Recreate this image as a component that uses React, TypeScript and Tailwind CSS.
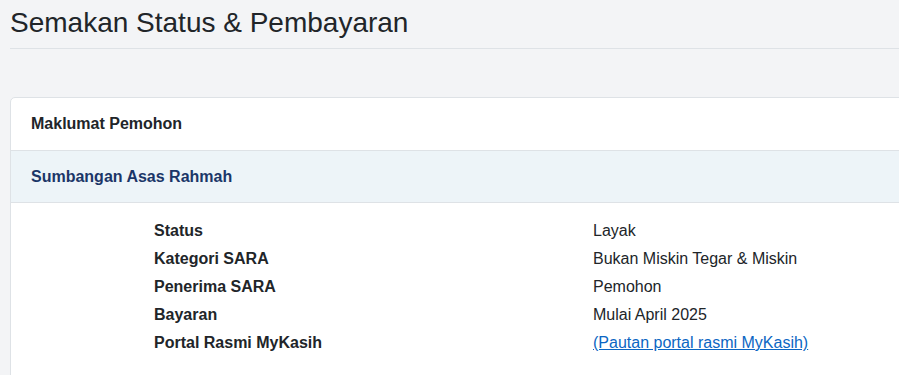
export default function App() {
  const rows: { label: string; value: string; link?: boolean }[] = [
    { label: "Status", value: "Layak" },
    { label: "Kategori SARA", value: "Bukan Miskin Tegar & Miskin" },
    { label: "Penerima SARA", value: "Pemohon" },
    { label: "Bayaran", value: "Mulai April 2025" },
    { label: "Portal Rasmi MyKasih", value: "(Pautan portal rasmi MyKasih)", link: true },
  ];
  return (
    <div
      className="w-[899px] h-[375px] overflow-hidden bg-[#f3f4f6] text-[#212529]"
      style={{ fontFamily: '"Liberation Sans", Arial, sans-serif' }}
    >
      <div className="w-[1200px] pl-[10px]">
        <div className="pt-[6px] pb-[8px] border-b border-[#dee2e6]">
          <h1 className="text-[28px] leading-[34px] font-normal">Semakan Status &amp; Pembayaran</h1>
        </div>
        <div className="mt-[48px] bg-white border border-[#dee2e6] rounded-[5px]">
          <div className="h-[53px] flex items-center px-[20px] border-b border-[#dee2e6]">
            <span className="text-[16px] font-bold leading-[24px]">Maklumat Pemohon</span>
          </div>
          <div className="h-[52px] flex items-center px-[20px] bg-[#edf4f8] border-b border-[#dee2e6]">
            <span className="text-[16px] font-bold leading-[24px] text-[#1b3668]">Sumbangan Asas Rahmah</span>
          </div>
          <div className="pt-[14px] pb-[40px] pl-[143px]">
            {rows.map((r) => (
              <div key={r.label} className="flex text-[16px] leading-[28px]">
                <div className="w-[439px] font-bold">{r.label}</div>
                <div>
                  {r.link ? (
                    <a href="#" className="text-[#0b66c3] underline">
                      {r.value}
                    </a>
                  ) : (
                    r.value
                  )}
                </div>
              </div>
            ))}
          </div>
        </div>
      </div>
    </div>
  );
}
